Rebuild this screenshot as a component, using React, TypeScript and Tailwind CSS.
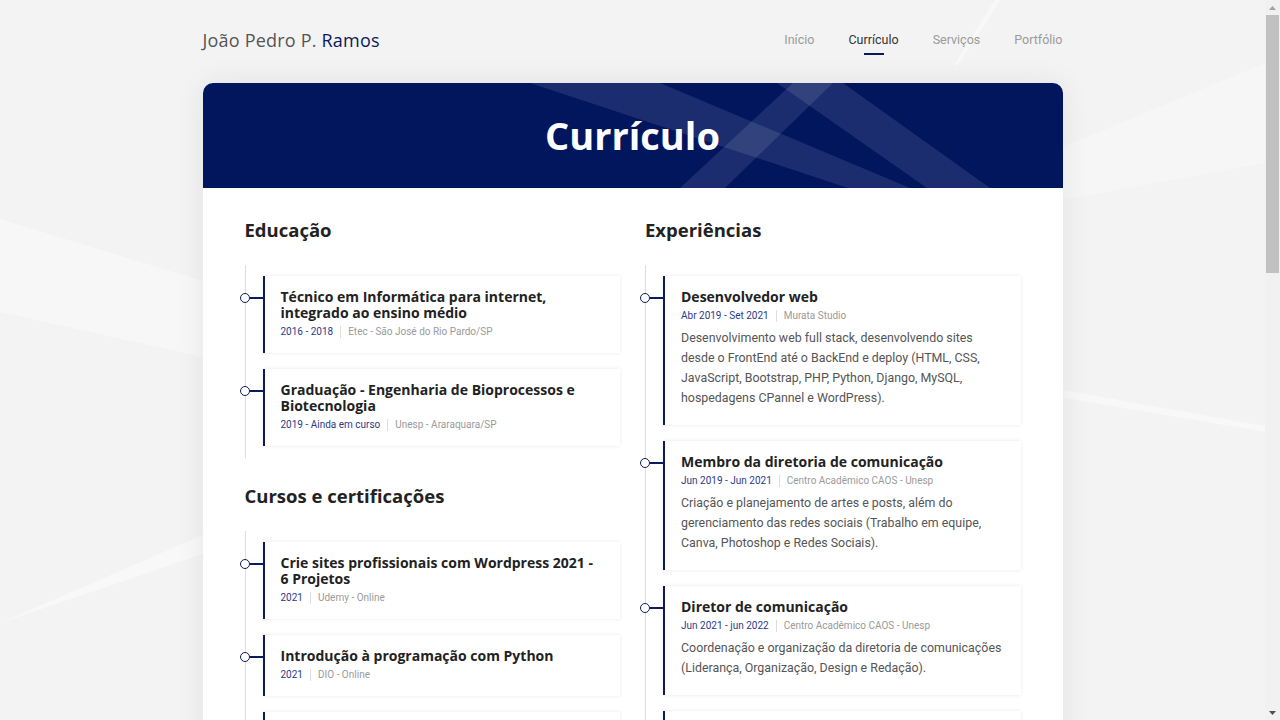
import React from "react";

type Item = {
  title: string;
  date: string;
  place: string;
  desc?: string;
};

const educacao: Item[] = [
  {
    title: "Técnico em Informática para internet, integrado ao ensino médio",
    date: "2016 - 2018",
    place: "Etec - São José do Rio Pardo/SP",
  },
  {
    title: "Graduação - Engenharia de Bioprocessos e Biotecnologia",
    date: "2019 - Ainda em curso",
    place: "Unesp - Araraquara/SP",
  },
];

const cursos: Item[] = [
  {
    title: "Crie sites profissionais com Wordpress 2021 - 6 Projetos",
    date: "2021",
    place: "Udemy - Online",
  },
  {
    title: "Introdução à programação com Python",
    date: "2021",
    place: "DIO - Online",
  },
  {
    title: "Desenvolvimento Web Completo",
    date: "2020",
    place: "Udemy - Online",
  },
];

const experiencias: Item[] = [
  {
    title: "Desenvolvedor web",
    date: "Abr 2019 - Set 2021",
    place: "Murata Studio",
    desc: "Desenvolvimento web full stack, desenvolvendo sites desde o FrontEnd até o BackEnd e deploy (HTML, CSS, JavaScript, Bootstrap, PHP, Python, Django, MySQL, hospedagens CPannel e WordPress).",
  },
  {
    title: "Membro da diretoria de comunicação",
    date: "Jun 2019 - Jun 2021",
    place: "Centro Acadêmico CAOS - Unesp",
    desc: "Criação e planejamento de artes e posts, além do gerenciamento das redes sociais (Trabalho em equipe, Canva, Photoshop e Redes Sociais).",
  },
  {
    title: "Diretor de comunicação",
    date: "Jun 2021 - jun 2022",
    place: "Centro Acadêmico CAOS - Unesp",
    desc: "Coordenação e organização da diretoria de comunicações (Liderança, Organização, Design e Redação).",
  },
  {
    title: "Estagiário de desenvolvimento",
    date: "2022 - Atual",
    place: "Remoto",
    desc: "Desenvolvimento de aplicações web e manutenção de sistemas.",
  },
];

const heading = "font-['Open_Sans',sans-serif] font-bold text-[#222]";

function TimelineCard({ item }: { item: Item }) {
  return (
    <div className="relative ml-[17px] bg-white border-l-2 border-[#0b1a5c] shadow-[0_0_4px_rgba(0,0,0,0.09)] pl-[16px] pr-[12px] pt-[13px] pb-[14px]">
      {/* marcador da linha do tempo */}
      <div className="absolute left-[-25px] top-[17px] flex items-center">
        <div className="w-[10px] h-[10px] rounded-full border-[1.5px] border-[#0b1a5c] bg-white" />
        <div className="w-[15px] h-[2px] bg-[#0b1a5c]" />
      </div>
      <h4 className={`${heading} text-[14px] leading-[16px] pr-[4px]`}>{item.title}</h4>
      <div className="flex items-center mt-[4px] text-[10px] leading-[14px] font-['Roboto',sans-serif]">
        <span className="text-[#2b3a8a]">{item.date}</span>
        <span className="w-px h-[12px] bg-[#ddd] mx-[7px]" />
        <span className="text-[#9a9a9a]">{item.place}</span>
      </div>
      {item.desc && (
        <p className="mt-[5px] mb-[3px] text-[12.4px] leading-[20px] text-[#555] font-['Roboto',sans-serif]">
          {item.desc}
        </p>
      )}
    </div>
  );
}

function Timeline({ items }: { items: Item[] }) {
  return (
    <div className="border-l border-[#dedede] pt-[11px] pb-[12px] flex flex-col gap-[16px]">
      {items.map((it) => (
        <TimelineCard key={it.title} item={it} />
      ))}
    </div>
  );
}

function Scrollbar() {
  return (
    <div className="w-[15px] h-screen bg-[#f1f1f1] flex flex-col items-center">
      <div className="h-[15px] flex items-center justify-center">
        <svg width="7" height="4" viewBox="0 0 7 4">
          <polygon points="0,4 3.5,0 7,4" fill="#a3a3a3" />
        </svg>
      </div>
      <div className="w-[13px] flex-1">
        <div className="w-full h-[258px] bg-[#c1c1c1]" />
      </div>
      <div className="h-[15px] flex items-center justify-center">
        <svg width="7" height="4" viewBox="0 0 7 4">
          <polygon points="0,0 3.5,4 7,0" fill="#505050" />
        </svg>
      </div>
    </div>
  );
}

export default function App() {
  return (
    <div className="flex h-screen overflow-hidden bg-[#f3f3f3]">
      <div className="relative flex-1 h-screen overflow-hidden">
        {/* Fundo com faixas claras */}
        <svg
          className="absolute left-0 top-0 pointer-events-none"
          width="1265"
          height="720"
          viewBox="0 0 1265 720"
        >
          <polygon points="0,219 203,281 203,357 0,312" fill="#ffffff" opacity="0.35" />
          <polygon points="203,535 0,623 203,554" fill="#ffffff" opacity="0.45" />
          <polygon points="1063,147 1265,63 1265,163 1063,200" fill="#ffffff" opacity="0.3" />
          <polygon points="1063,390 1265,426 1265,432 1063,398" fill="#ffffff" opacity="0.4" />
          <polygon points="995,0 1001,0 958,65 954,65" fill="#ffffff" opacity="0.4" />
        </svg>

        <div className="relative w-[860px] mx-auto">
          {/* Header */}
          <header className="h-[83px] flex items-center justify-between pb-[3px]">
            <div className="font-['Open_Sans',sans-serif] text-[18px] text-[#555] tracking-[0.2px]">
              João Pedro P. <span className="text-[#0b1a5c]">Ramos</span>
            </div>
            <nav className="flex items-center gap-[34px] font-['Roboto',sans-serif] text-[12.5px] text-[#9a9a9a]">
              <a>Início</a>
              <a className="relative text-[#333]">
                Currículo
                <span className="absolute left-1/2 -translate-x-1/2 top-[22px] w-[20px] h-[2px] bg-[#0b1a5c]" />
              </a>
              <a>Serviços</a>
              <a>Portfólio</a>
            </nav>
          </header>

          {/* Card principal */}
          <main className="bg-white rounded-t-[10px] shadow-[0_0_30px_rgba(0,0,0,0.07)] mb-[40px]">
            <div className="relative h-[105px] bg-[#02165e] rounded-t-[10px] overflow-hidden flex items-center justify-center">
              <svg className="absolute inset-0" width="860" height="105" viewBox="0 0 860 105">
                <polygon points="327,0 457,0 707,105 645,105" fill="#ffffff" opacity="0.1" />
                <polygon points="574,0 640,0 787,105 724,105" fill="#ffffff" opacity="0.1" />
                <polygon points="590,0 630,0 522,105 477,105" fill="#ffffff" opacity="0.1" />
              </svg>
              <h1 className="relative font-['Open_Sans',sans-serif] font-bold text-white text-[38px] leading-none pb-[2px]">
                Currículo
              </h1>
            </div>

            <div className="grid grid-cols-2 gap-[25px] px-[42px] pt-[31px] pb-[40px]">
              <section>
                <h3 className={`${heading} text-[18.5px] leading-[22px]`}>Educação</h3>
                <div className="mt-[24px]">
                  <Timeline items={educacao} />
                </div>
                <h3 className={`${heading} text-[18.5px] leading-[22px] mt-[27px]`}>
                  Cursos e certificações
                </h3>
                <div className="mt-[24px]">
                  <Timeline items={cursos} />
                </div>
              </section>
              <section>
                <h3 className={`${heading} text-[18.5px] leading-[22px]`}>Experiências</h3>
                <div className="mt-[24px]">
                  <Timeline items={experiencias} />
                </div>
              </section>
            </div>
          </main>
        </div>
      </div>
      <Scrollbar />
    </div>
  );
}
